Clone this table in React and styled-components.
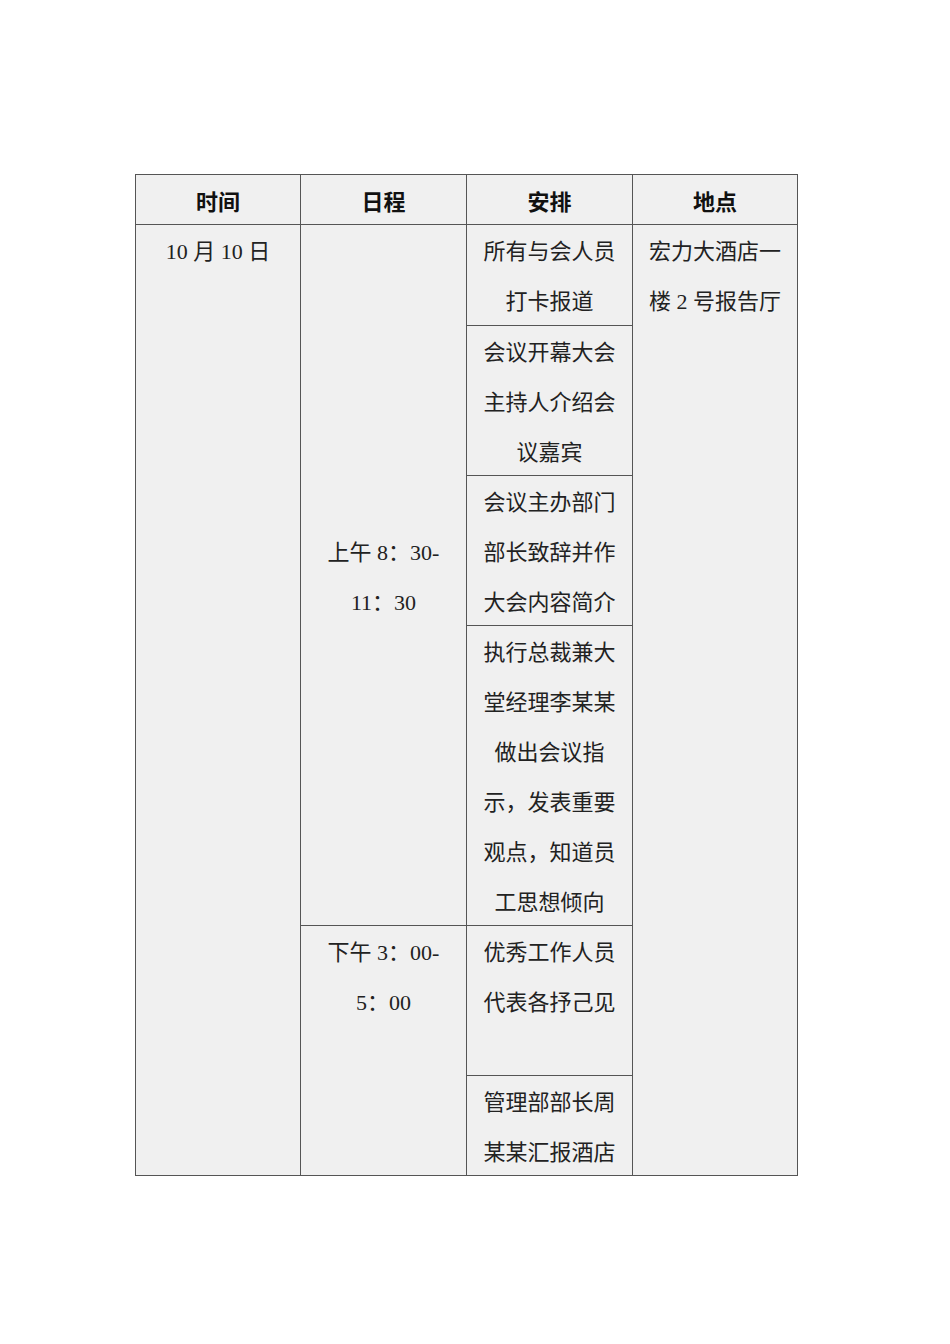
import React from "react";
import styled, { createGlobalStyle } from "styled-components";

const GlobalStyle = createGlobalStyle`
    html, body {
        margin: 0;
        padding: 0;
        background: #ffffff;
    }
`;

const headers = ["时间", "日程", "安排", "地点"];

const arrangements = [
    ["所有与会人员", "打卡报道"],
    ["会议开幕大会", "主持人介绍会", "议嘉宾"],
    ["会议主办部门", "部长致辞并作", "大会内容简介"],
    ["执行总裁兼大", "堂经理李某某", "做出会议指", "示，发表重要", "观点，知道员", "工思想倾向"],
    ["优秀工作人员", "代表各抒己见"],
    ["管理部部长周", "某某汇报酒店"],
];

const Lines = ({ lines }) =>
    lines.map((line, i) => (
        <React.Fragment key={i}>
            {i > 0 && <br />}
            {line}
        </React.Fragment>
    ));

const App = () => {
    return (
        <Page>
            <GlobalStyle />
            <Grid>
                {headers.map((h) => (
                    <HeadCell key={h}>{h}</HeadCell>
                ))}
                <Cell $col={1} $row="2 / 8">
                    10 月 10 日
                </Cell>
                <Cell $col={2} $row="2 / 6" $middle>
                    <Lines lines={["上午 8：30-", "11：30"]} />
                </Cell>
                <Cell $col={2} $row="6 / 8">
                    <Lines lines={["下午 3：00-", "5：00"]} />
                </Cell>
                {arrangements.map((lines, i) => (
                    <Cell key={i} $col={3} $row={`${i + 2}`}>
                        <Lines lines={lines} />
                    </Cell>
                ))}
                <Cell $col={4} $row="2 / 8">
                    <Lines lines={["宏力大酒店一", "楼 2 号报告厅"]} />
                </Cell>
            </Grid>
        </Page>
    );
};

const Page = styled.div`
    width: 950px;
    min-height: 1344px;
    padding: 174px 0 0 135px;
    box-sizing: border-box;
    background: #ffffff;
`;

const Grid = styled.div`
    display: inline-grid;
    grid-template-columns: 164px 165px 165px 164px;
    grid-template-rows: 49px 100px 149px 149px 299px 149px 99px;
    gap: 1px;
    padding: 1px;
    background: #555555;
`;

const HeadCell = styled.div`
    display: flex;
    align-items: center;
    justify-content: center;
    background: #f0f0f0;
    font-family: "Noto Sans CJK SC", "Liberation Sans", sans-serif;
    font-size: 22px;
    font-weight: 700;
    color: #111111;
`;

const Cell = styled.div`
    grid-column: ${(props) => props.$col};
    grid-row: ${(props) => props.$row};
    display: flex;
    flex-direction: column;
    justify-content: ${(props) => (props.$middle ? "center" : "flex-start")};
    padding-top: ${(props) => (props.$middle ? "6px" : "2px")};
    box-sizing: border-box;
    background: #f0f0f0;
    font-family: "Liberation Serif", "Noto Sans CJK SC", serif;
    font-size: 22px;
    line-height: 50px;
    color: #222222;
    text-align: center;
    white-space: nowrap;
`;

export default App;
